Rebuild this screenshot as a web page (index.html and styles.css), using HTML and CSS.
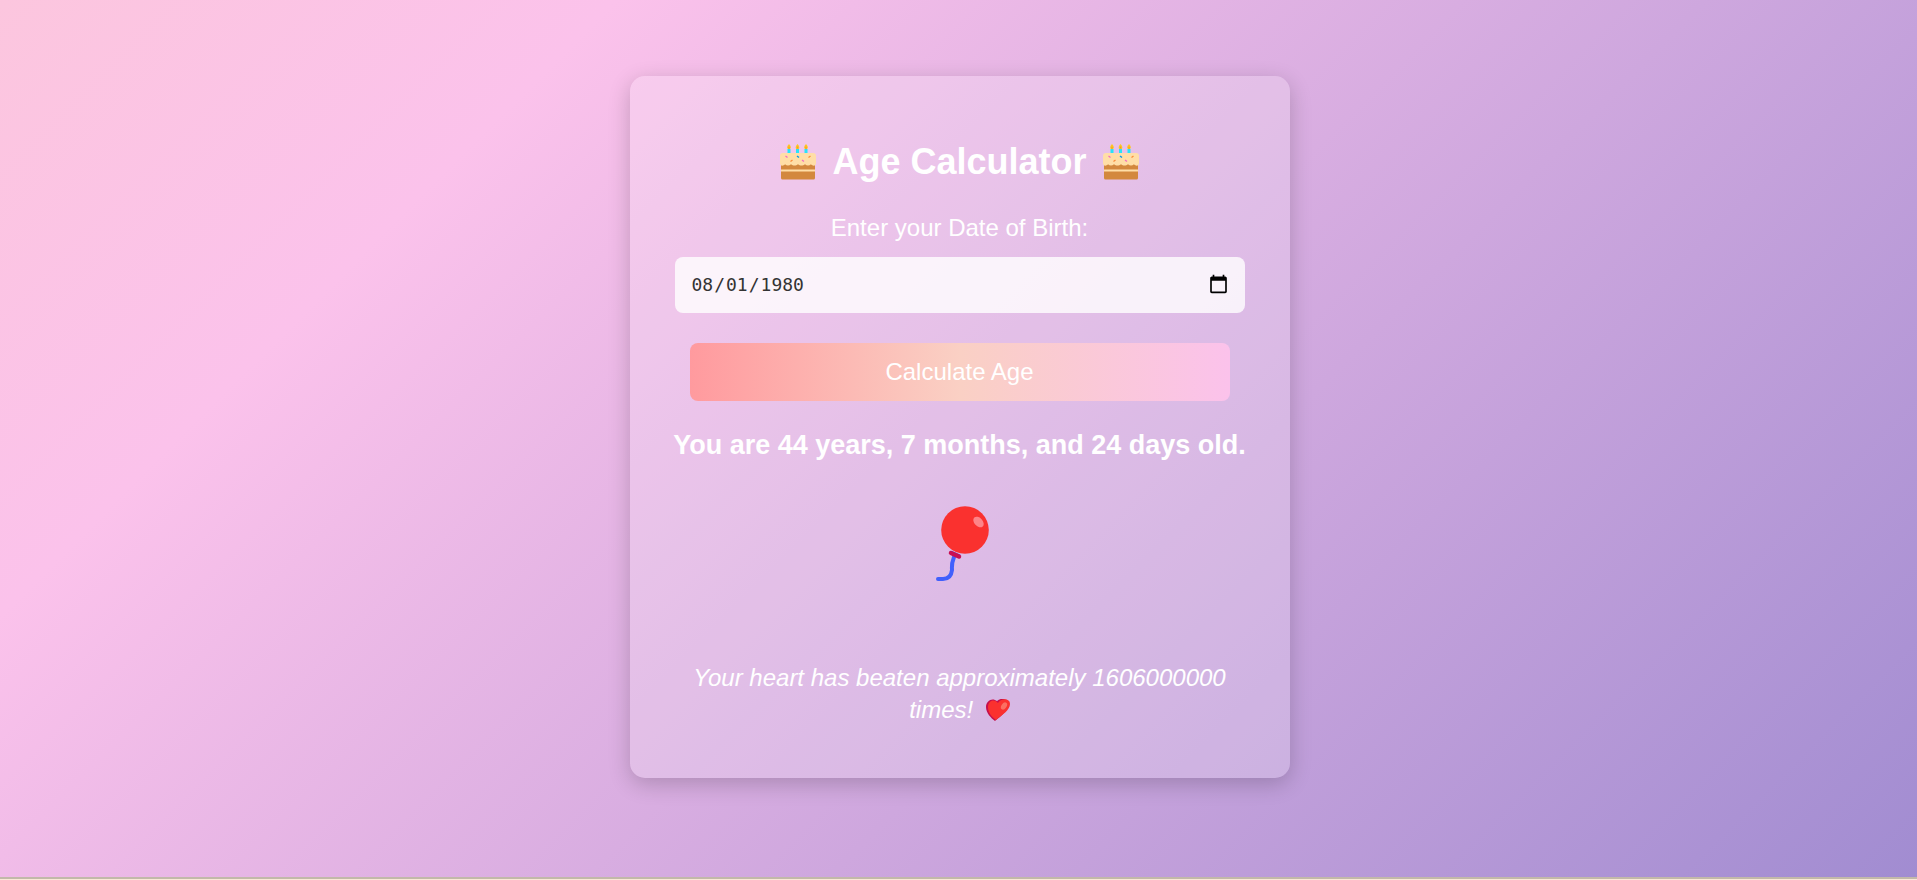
FILE: index.html
```html
<!DOCTYPE html>
<html lang="en-US">
<head>
<meta charset="utf-8">
<title>Age Calculator</title>
<link rel="stylesheet" href="styles.css">
</head>
<body>
<svg class="defs" aria-hidden="true">
  <symbol id="cake" viewBox="0 0 36 36">
    <path d="M9 0c-2 2-2.500 4-1 5h2c1.500-1 1-3-1-5zM17.500 0c-2 2-2.500 4-1 5h2c1.500-1 1-3-1-5zM26 0c-2 2-2.500 4-1 5h2c1.500-1 1-3-1-5z" fill="#fcc624"/>
    <path d="M9 2l-1 2.500h2zM17.500 2l-1 2.500h2zM26 2l-1 2.500h2z" fill="#f79a20"/>
    <path d="M7.500 5h3v5h-3zM16 5h3v5h-3zM24.500 5h3v5h-3z" fill="#27e4f8"/>
    <path d="M1 18h34v16a1.500 1.500 0 0 1-1.500 1.500h-31A1.500 1.500 0 0 1 1 34z" fill="#d3883e"/>
    <path d="M1 25.500h34v2H1z" fill="#ffdea7"/>
    <path d="M3 9h30c2 0 3 1 3 3v7c0 3-3 3.500-5 1.200-2 1.800-4 1.800-6 0-2 1.800-5 1.800-7 0-2 1.800-5 1.800-7 0-2 1.800-4 1.800-6 0C3 22.500 0 22 0 19v-7c0-2 1-3 3-3z" fill="#ffdea7"/>
    <path d="M5.500 12l2 1.500M22 16l2 1.500" stroke="#f36fc0" stroke-width="1.300"/>
    <path d="M17 12l2 1.500" stroke="#0899e8" stroke-width="1.500"/>
    <path d="M28.500 13.500l2-1.500M10.500 17.500l2-1.500" stroke="#fb8d3d" stroke-width="1.300"/>
  </symbol>
</svg>
<main class="page">
  <section class="card">
    <h1 class="title">
      <svg class="cake" aria-hidden="true"><use href="#cake"/></svg>
      Age Calculator
      <svg class="cake" aria-hidden="true"><use href="#cake"/></svg>
    </h1>
    <label class="label" for="dob">Enter your Date of Birth:</label>
    <input class="date" type="date" id="dob" value="1980-08-01">
    <button class="button" type="button">Calculate Age</button>
    <p class="result">You are 44 years, 7 months, and 24 days old.</p>
    <svg class="balloon" viewBox="0 0 56 76" aria-hidden="true">
      <path d="M19 51C16 59 17 60 17 64Q16 73 8 73H3" fill="none" stroke="#4160fc" stroke-width="4" stroke-linecap="round"/>
      <circle cx="30" cy="24" r="23.800" fill="#fa312f"/>
      <path d="M16 46l9 4" fill="none" stroke="#4160fc" stroke-width="3"/>
      <path d="M16 47l8 3.500" fill="none" stroke="#c90f52" stroke-width="4.500" stroke-linecap="round"/>
      <ellipse cx="43.500" cy="16" rx="4.200" ry="6.200" transform="rotate(-43 43.500 16)" fill="#fd8488"/>
    </svg>
    <p class="fact">Your heart has beaten approximately 1606000000 times!
      <svg class="heart" viewBox="0 0 24 22" aria-hidden="true">
        <path d="M9 22C5 19 0 14 0 8 0 2 6-2 11 2c4-4 11-2 11 3 0 7-7 12-13 17z" fill="#c50f4c"/>
        <path d="M10 21C6 18 2 14 2 8c0-6 6-9 10-4 3-5 12-5 12 1 0 6-8 11-14 16z" fill="#fa312f"/>
        <ellipse cx="18" cy="7" rx="2.500" ry="4" transform="rotate(35 18 7)" fill="#fb6f62"/>
      </svg>
    </p>
  </section>
</main>
<footer class="strip"></footer>
</body>
</html>
```
FILE: styles.css
```css
* { box-sizing: border-box; }
body {
  margin: 0;
  min-height: 100vh;
  display: flex;
  flex-direction: column;
  font-family: Arial, "Liberation Sans", sans-serif;
  color: #fff;
  background: linear-gradient(135deg, #fcc6de 0%, #fbc2eb 22%, #a18cd1 100%);
}
.defs { display: none; }
.page {
  flex: 1;
  display: flex;
  align-items: center;
  justify-content: center;
  padding: 0 0 24px 2px;
}
.card {
  width: 100%;
  max-width: 660px;
  padding: 64px 45px 52px;
  display: flex;
  flex-direction: column;
  align-items: center;
  text-align: center;
  border-radius: 15px;
  background: rgba(255, 255, 255, 0.2);
  box-shadow: 0 6px 22px rgba(0, 0, 0, 0.2);
}
.title {
  margin: 0 0 30px;
  display: flex;
  align-items: center;
  gap: 16px;
  font-size: 36px;
  line-height: 44px;
}
.cake { width: 36px; height: 36px; }
.label {
  margin-bottom: 15px;
  font-size: 24px;
  line-height: 28px;
}
.date {
  width: 100%;
  height: 56px;
  padding: 0 16px;
  border: 0;
  border-radius: 8px;
  background: rgba(255, 255, 255, 0.8);
  color: #333;
  font: 18px "DejaVu Sans Mono", monospace;
}
.date::-webkit-calendar-picker-indicator {
  width: 21px;
  height: 21px;
  padding: 0;
}
.button {
  width: calc(100% - 30px);
  height: 58px;
  margin: 30px 0 28px;
  border: 0;
  border-radius: 8px;
  background: linear-gradient(to right, #ff9a9e, #fad0c4, #fbc2eb);
  color: #fff;
  font: 24px Arial, "Liberation Sans", sans-serif;
}
.result {
  margin: 0;
  font-size: 27px;
  font-weight: 700;
  line-height: 32px;
  white-space: nowrap;
}
.balloon {
  width: 56px;
  height: 76px;
  margin: 45px 0 80px 6px;
}
.fact {
  margin: 0;
  font-size: 24px;
  font-style: italic;
  line-height: 32px;
}
.heart {
  width: 24px;
  height: 22px;
  margin-left: 6px;
  vertical-align: -3px;
}
.strip {
  height: 3px;
  border-top: 2px solid #c2b9a9;
  background: #fbe8d9;
}
```
